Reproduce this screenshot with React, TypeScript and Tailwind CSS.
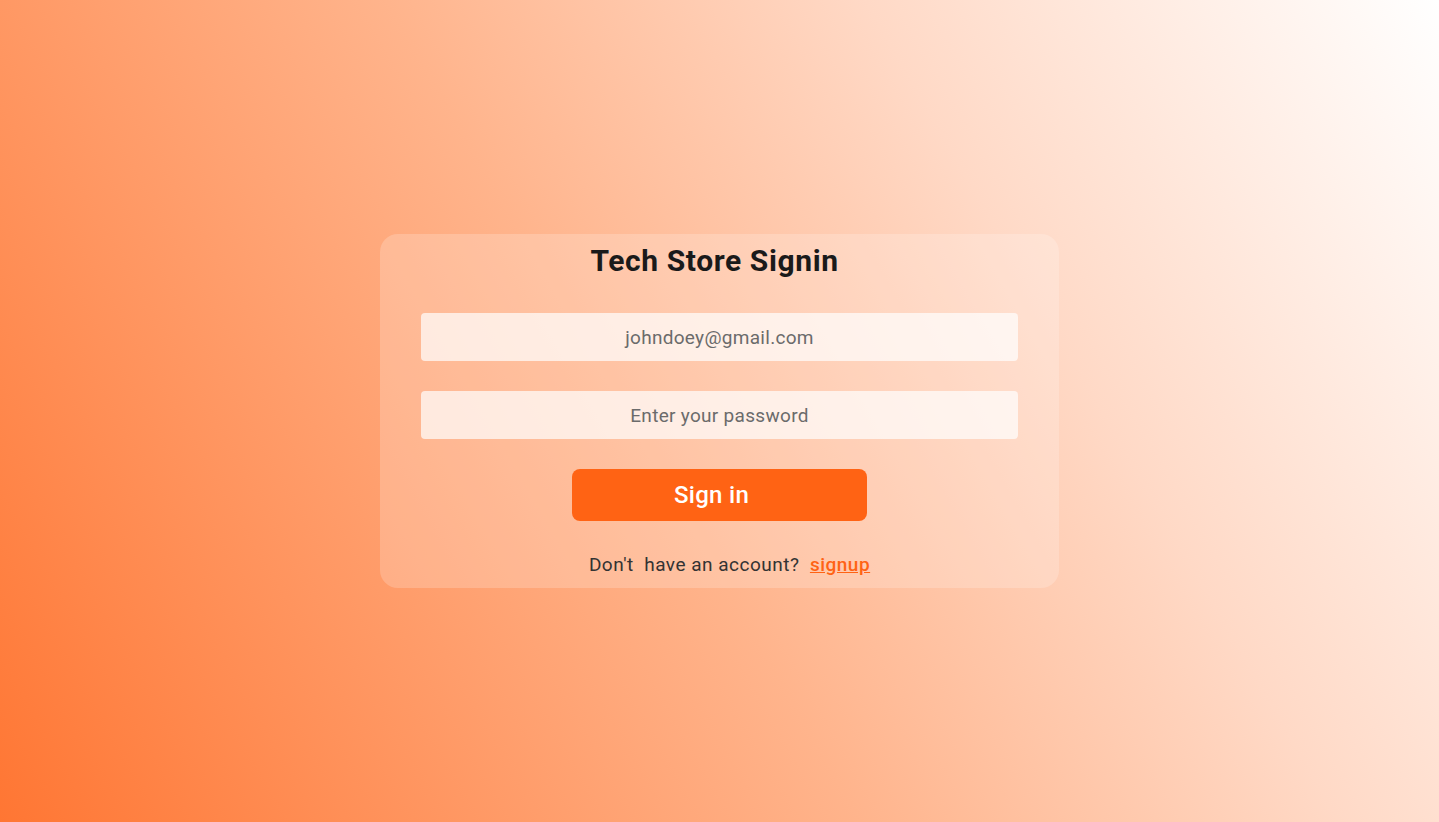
export default function App() {
  return (
    <div
      className="w-full h-[822px] flex items-center justify-center bg-[linear-gradient(60deg,#ff7633_0%,#ffb48c_45%,#ffd9c6_70%,#ffffff_100%)]"
      style={{ fontFamily: "Roboto, 'Noto Sans', sans-serif" }}
    >
      <div className="w-[679px] h-[354px] rounded-[18px] bg-white/20 px-[41px] pt-[9px] flex flex-col items-center">
        <h1 className="pr-[10px] text-[30px] leading-[36px] font-bold text-[#1a1a1a] tracking-[0.6px]">Tech Store Signin</h1>
        <input
          className="mt-[34px] w-full h-[48px] rounded-[4px] bg-white/70 text-center text-[19px] tracking-[0.3px] text-[#555] placeholder:text-[#6b6b6b] outline-none"
          placeholder="johndoey@gmail.com"
        />
        <input
          type="password"
          className="mt-[30px] w-full h-[48px] rounded-[4px] bg-white/70 text-center text-[19px] tracking-[0.3px] text-[#555] placeholder:text-[#6b6b6b] outline-none"
          placeholder="Enter your password"
        />
        <button className="mt-[30px] w-[295px] h-[52px] rounded-[8px] bg-[#ff6314] text-white text-[24px] font-medium tracking-[0.3px] pr-[16px]">
          Sign in
        </button>
        <p className="mt-[30px] pl-[20px] text-[19px] text-[#333] tracking-[0.5px]">
          Don't&nbsp; have an account?&nbsp;{" "}
          <a href="#" className="text-[#ff6314] underline font-medium">signup</a>
        </p>
      </div>
    </div>
  );
}
